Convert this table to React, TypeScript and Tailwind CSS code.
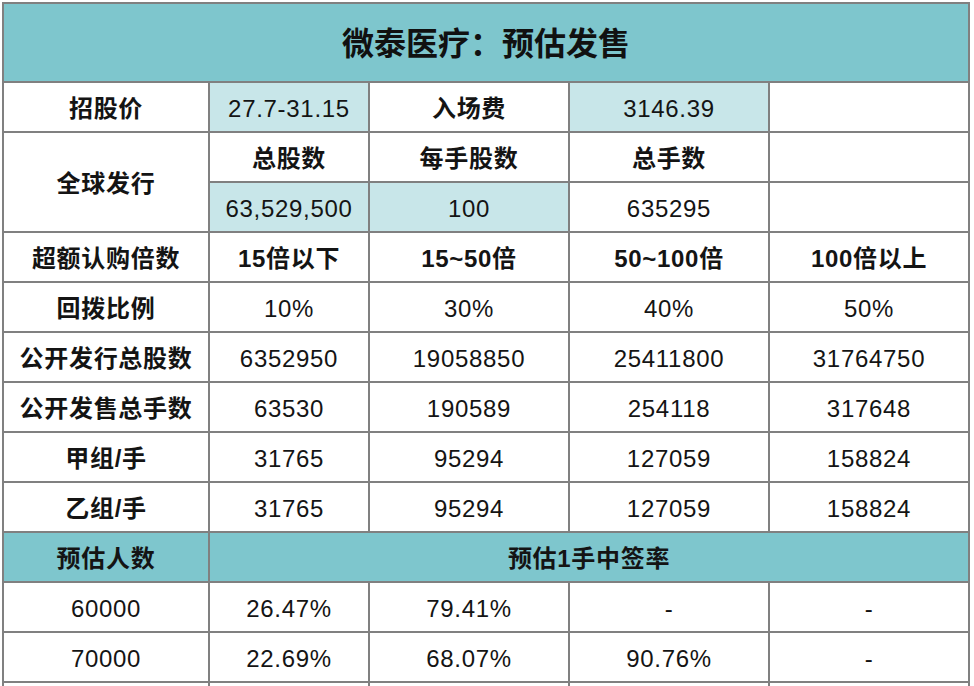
import React from "react";

const TEAL = "bg-[#7ec6cd]";
const LIGHT = "bg-[#c8e6e9]";

type CellProps = {
  children?: React.ReactNode;
  className?: string;
};

function Cell({ children, className = "" }: CellProps) {
  return (
    <div className={`flex items-center justify-center pt-[3px] text-[24px] leading-none text-[#141414] tracking-[0.7px] ${className}`}>
      {children}
    </div>
  );
}

export default function App() {
  const rows: string[][] = [
    ["公开发行总股数", "6352950", "19058850", "25411800", "31764750"],
    ["公开发售总手数", "63530", "190589", "254118", "317648"],
    ["甲组/手", "31765", "95294", "127059", "158824"],
    ["乙组/手", "31765", "95294", "127059", "158824"],
  ];
  const est: string[][] = [
    ["60000", "26.47%", "79.41%", "-", "-"],
    ["70000", "22.69%", "68.07%", "90.76%", "-"],
  ];
  return (
    <div
      className="h-screen overflow-hidden bg-white pt-[2px] pl-[2px]"
      style={{ fontFamily: '"Liberation Sans", "Noto Sans CJK SC", sans-serif' }}
    >
      <div className="grid w-[968px] grid-cols-[204px_158px_198px_198px_198px] grid-rows-[77px] auto-rows-[48px] gap-[2px] bg-[#808080] p-[2px]">
        <div className={`col-span-5 ${TEAL} flex items-center justify-center text-[32px] font-bold text-[#111] pt-[3px]`}>
          微泰医疗：预估发售
        </div>

        <Cell className="bg-white font-bold">招股价</Cell>
        <Cell className={LIGHT}>27.7-31.15</Cell>
        <Cell className="bg-white font-bold">入场费</Cell>
        <Cell className={LIGHT}>3146.39</Cell>
        <Cell className="bg-white" />

        <Cell className="row-span-2 bg-white font-bold">全球发行</Cell>
        <Cell className="bg-white font-bold">总股数</Cell>
        <Cell className="bg-white font-bold">每手股数</Cell>
        <Cell className="bg-white font-bold">总手数</Cell>
        <Cell className="bg-white" />
        <Cell className={LIGHT}>63,529,500</Cell>
        <Cell className={LIGHT}>100</Cell>
        <Cell className="bg-white">635295</Cell>
        <Cell className="bg-white" />

        <Cell className="bg-white font-bold">超额认购倍数</Cell>
        <Cell className="bg-white font-bold">15倍以下</Cell>
        <Cell className="bg-white font-bold">15~50倍</Cell>
        <Cell className="bg-white font-bold">50~100倍</Cell>
        <Cell className="bg-white font-bold">100倍以上</Cell>

        <Cell className="bg-white font-bold">回拨比例</Cell>
        <Cell className="bg-white">10%</Cell>
        <Cell className="bg-white">30%</Cell>
        <Cell className="bg-white">40%</Cell>
        <Cell className="bg-white">50%</Cell>

        {rows.map((r, i) =>
          r.map((v, j) => (
            <Cell key={`r${i}-${j}`} className={`bg-white ${j === 0 ? "font-bold" : ""}`}>
              {v}
            </Cell>
          ))
        )}

        <Cell className={`${TEAL} font-bold`}>预估人数</Cell>
        <Cell className={`${TEAL} col-span-4 font-bold`}>预估1手中签率</Cell>

        {est.map((r, i) =>
          r.map((v, j) => (
            <Cell key={`e${i}-${j}`} className="bg-white">
              {v}
            </Cell>
          ))
        )}
        <Cell className="bg-white" />
        <Cell className="bg-white" />
        <Cell className="bg-white" />
        <Cell className="bg-white" />
        <Cell className="bg-white" />
      </div>
    </div>
  );
}
